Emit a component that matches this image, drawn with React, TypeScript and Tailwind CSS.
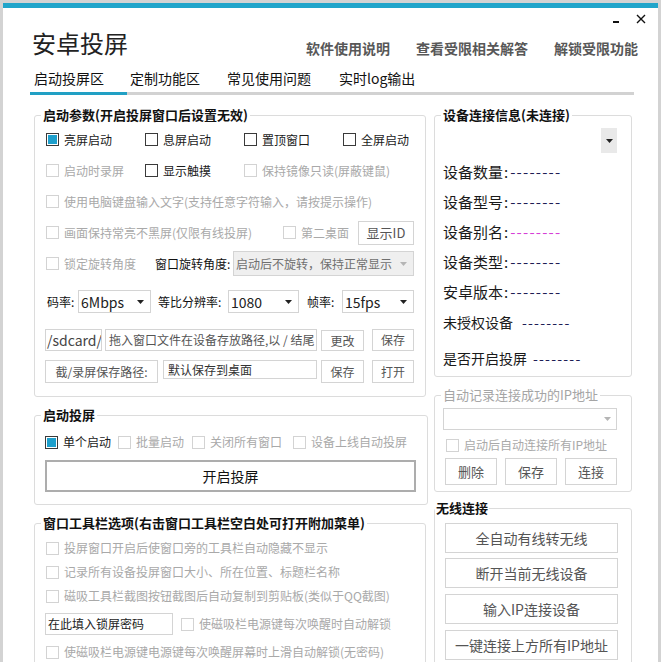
import React from "react";

type CheckProps = {
  label: string;
  checked?: boolean;
  disabled?: boolean;
  className?: string;
};

const Check = ({ label, checked, disabled, className = "" }: CheckProps) => (
  <div className={`flex items-center shrink-0 ${className}`}>
    <span
      className={`w-[13px] h-[13px] border bg-white flex items-center justify-center shrink-0 ${
        disabled ? "border-[#d3d3d3]" : "border-[#3a3a3a]"
      }`}
    >
      {checked && <span className="w-[9px] h-[9px] bg-[#1d9fcc]" />}
    </span>
    <span
      className={`ml-[5px] text-[12px] leading-[16px] whitespace-nowrap ${
        disabled ? "text-[#a9a9a9]" : "text-[#1a1a1a]"
      }`}
    >
      {label}
    </span>
  </div>
);

const Arrow = ({ light }: { light?: boolean }) => (
  <svg width="7" height="4" viewBox="0 0 7 4" className="shrink-0">
    <polygon points="0,0 7,0 3.5,4" fill={light ? "#b5b5b5" : "#222"} />
  </svg>
);

const Combo = ({ value, className = "" }: { value: string; className?: string }) => (
  <div
    className={`h-[23px] border border-[#d4d4d4] bg-white flex items-center pl-[2px] pr-[6px] ${className}`}
  >
    <span className="flex-1 text-[14px] leading-[20px] text-[#222] whitespace-nowrap">{value}</span>
    <Arrow />
  </div>
);

const Btn = ({ label, className = "" }: { label: string; className?: string }) => (
  <div
    className={`border border-[#d4d4d4] bg-white flex items-center justify-center text-[12px] leading-[16px] text-[#555] whitespace-nowrap shrink-0 ${className}`}
  >
    {label}
  </div>
);

const Box = ({
  legend,
  legendClass = "ml-[6px] px-[2px] font-bold text-[#111]",
  className = "",
  children,
}: {
  legend: string;
  legendClass?: string;
  className?: string;
  children: React.ReactNode;
}) => (
  <fieldset className={`border border-[#dcdcdc] rounded-[3px] ${className}`}>
    <legend className={`text-[13px] leading-[16px] whitespace-nowrap ${legendClass}`}>{legend}</legend>
    {children}
  </fieldset>
);

const Dash = ({ pink }: { pink?: boolean }) => (
  <span className={`tracking-[1.2px] ${pink ? "text-[#d63fd6]" : "text-[#1e1e55]"}`}>--------</span>
);

const infoRows = [
  { label: "设备数量", pink: false },
  { label: "设备型号", pink: false },
  { label: "设备别名", pink: true },
  { label: "设备类型", pink: false },
  { label: "安卓版本", pink: false },
];

export default function App() {
  return (
    <div className="w-[664px] h-[662px] overflow-hidden bg-white font-['Noto_Sans_CJK_SC',sans-serif]">
      <div className="w-[661px] h-[662px] border-l-[3px] border-r-[3px] border-t-[3px] border-[#d3d3d3] flex flex-col">
        <div className="h-[5px] bg-[#21a5ca] shrink-0" />

        {/* window controls */}
        <div className="h-[19px] shrink-0 flex justify-end pr-[12px]">
          <div className="w-[6px] h-[2px] bg-[#111] mt-[13px]" />
          <svg width="10" height="10" viewBox="0 0 10 10" className="ml-[17px] mt-[6px]">
            <path d="M1 1 L9 9 M9 1 L1 9" stroke="#111" strokeWidth="1.4" />
          </svg>
        </div>

        {/* title + links */}
        <div className="h-[32px] shrink-0 flex items-end pl-[29px] pr-[20px]">
          <span className="text-[24px] leading-[32px] text-[#222]">安卓投屏</span>
          <div className="ml-auto mb-[1px] flex gap-[26px] text-[14px] leading-[20px] font-bold text-[#585858]">
            <span>软件使用说明</span>
            <span>查看受限相关解答</span>
            <span>解锁受限功能</span>
          </div>
        </div>

        {/* tabs */}
        <div className="h-[33px] shrink-0 pt-[9px] flex text-[14px] leading-[20px] text-[#111]">
          <span className="ml-[31px]">启动投屏区</span>
          <span className="ml-[26px]">定制功能区</span>
          <span className="ml-[27px]">常见使用问题</span>
          <span className="ml-[28px]">实时log输出</span>
        </div>
        <div className="h-[3px] shrink-0 ml-[27px] w-[604px] flex">
          <div className="w-[97px] bg-[#21a0c4]" />
          <div className="flex-1 bg-[#d2d2d2]" />
        </div>

        <div className="flex pl-[31px] pt-[12px] gap-[8px]">
          {/* left column */}
          <div className="w-[392px] shrink-0 flex flex-col">
            <Box legend="启动参数(开启投屏窗口后设置无效)">
              <div className="px-[11px] pt-[1px] pb-[13px] flex flex-col">
                <div className="h-[31px] grid grid-cols-[99px_99px_99px_auto] items-center">
                  <Check label="亮屏启动" checked />
                  <Check label="息屏启动" />
                  <Check label="置顶窗口" />
                  <Check label="全屏启动" />
                </div>
                <div className="h-[31px] grid grid-cols-[99px_99px_auto] items-center">
                  <Check label="启动时录屏" disabled />
                  <Check label="显示触摸" />
                  <Check label="保持镜像只读(屏蔽键鼠)" disabled />
                </div>
                <div className="h-[31px] flex items-center">
                  <Check label="使用电脑键盘输入文字(支持任意字符输入，请按提示操作)" disabled />
                </div>
                <div className="h-[31px] flex items-center">
                  <Check label="画面保持常亮不黑屏(仅限有线投屏)" disabled className="w-[237px]" />
                  <Check label="第二桌面" disabled />
                  <Btn label="显示ID" className="ml-auto w-[56px] h-[24px] text-[13px] text-[#444]" />
                </div>
                <div className="h-[31px] flex items-center">
                  <Check label="锁定旋转角度" disabled className="w-[109px]" />
                  <span className="w-[78px] text-[12px] leading-[16px] text-[#111] whitespace-nowrap">
                    窗口旋转角度:
                  </span>
                  <div className="flex-1 h-[25px] border border-[#d4d4d4] bg-[#efefef] flex items-center pl-[2px] pr-[6px]">
                    <span className="flex-1 text-[12px] leading-[16px] text-[#6f6f6f] whitespace-nowrap">
                      启动后不旋转，保持正常显示
                    </span>
                    <Arrow light />
                  </div>
                </div>
                <div className="h-[23px] mt-[11px] flex items-center text-[12px] leading-[16px] text-[#111]">
                  <span className="ml-[1px] w-[31px] whitespace-nowrap">码率:</span>
                  <Combo value="6Mbps" className="w-[73px]" />
                  <span className="ml-[7px] w-[70px] whitespace-nowrap">等比分辨率:</span>
                  <Combo value="1080" className="w-[71px]" />
                  <span className="ml-[8px] w-[35px] whitespace-nowrap">帧率:</span>
                  <Combo value="15fps" className="w-[72px]" />
                </div>
                <div className="h-[22px] mt-[16px] flex items-stretch">
                  <div className="ml-[-1px] w-[57px] border border-[#d4d4d4] flex items-center pl-[1px] text-[14px] leading-[18px] text-[#444] whitespace-nowrap overflow-hidden">
                    /sdcard/
                  </div>
                  <div className="ml-[3px] w-[212px] border border-[#d4d4d4] flex items-center pl-[3px] text-[12px] leading-[16px] text-[#555] whitespace-nowrap overflow-hidden">
                    拖入窗口文件在设备存放路径,以 / 结尾
                  </div>
                  <Btn label="更改" className="ml-[4px] w-[43px] mt-[1px]" />
                  <Btn label="保存" className="ml-[8px] w-[42px]" />
                </div>
                <div className="h-[23px] mt-[9px] flex items-stretch">
                  <Btn label="截/录屏保存路径:" className="ml-[-1px] w-[113px] text-[#333]" />
                  <div className="ml-[5px] w-[154px] mb-[4px] border border-[#d4d4d4] flex items-center pl-[4px] text-[12px] leading-[16px] text-[#333] whitespace-nowrap">
                    默认保存到桌面
                  </div>
                  <Btn label="保存" className="ml-[4px] w-[43px]" />
                  <Btn label="打开" className="ml-[8px] w-[42px] text-[#333]" />
                </div>
              </div>
            </Box>

            <Box legend="启动投屏" className="mt-[10px]">
              <div className="px-[11px] pt-[8px] pb-[12px] flex flex-col">
                <div className="h-[22px] flex items-center">
                  <Check label="单个启动" checked className="ml-[-1px]" />
                  <Check label="批量启动" disabled className="ml-[7px]" />
                  <Check label="关闭所有窗口" disabled className="ml-[8px]" />
                  <Check label="设备上线自动投屏" disabled className="ml-[11px]" />
                </div>
                <div className="mt-[7px] ml-[-1px] h-[32px] w-[371px] border-2 border-[#adadad] bg-white flex items-center justify-center text-[14px] leading-[20px] text-[#111]">
                  开启投屏
                </div>
              </div>
            </Box>

            <Box legend="窗口工具栏选项(右击窗口工具栏空白处可打开附加菜单)" className="mt-[10px]">
              <div className="px-[11px] pt-[5px] pb-[12px] flex flex-col">
                <div className="h-[24px] flex items-center">
                  <Check label="投屏窗口开启后使窗口旁的工具栏自动隐藏不显示" disabled />
                </div>
                <div className="h-[24px] flex items-center">
                  <Check label="记录所有设备投屏窗口大小、所在位置、标题栏名称" disabled />
                </div>
                <div className="h-[24px] flex items-center">
                  <Check label="磁吸工具栏截图按钮截图后自动复制到剪贴板(类似于QQ截图)" disabled />
                </div>
                <div className="h-[24px] mt-[4px] flex items-center">
                  <div className="ml-[-1px] w-[128px] h-[22px] border border-[#d4d4d4] flex items-center pl-[2px] text-[12px] leading-[16px] text-[#222]">
                    在此填入锁屏密码
                  </div>
                  <Check label="使磁吸栏电源键每次唤醒时自动解锁" disabled className="ml-[8px]" />
                </div>
                <div className="h-[24px] mt-[4px] flex items-center">
                  <Check label="使磁吸栏电源键电源键每次唤醒屏幕时上滑自动解锁(无密码)" disabled />
                </div>
              </div>
            </Box>
          </div>

          {/* right column */}
          <div className="w-[198px] shrink-0 flex flex-col">
            <Box legend="设备连接信息(未连接)">
              <div className="pl-[8px] pr-[14px] pt-[5px] pb-[3px] flex flex-col text-[#1a1a1a]">
                <div className="flex justify-end">
                  <div className="w-[16px] h-[25px] bg-[#e9e9e9] flex items-center justify-center">
                    <Arrow />
                  </div>
                </div>
                <div className="mt-[4px] flex flex-col">
                  {infoRows.map((r) => (
                    <div key={r.label} className="h-[30px] flex items-center text-[15px] leading-[20px] whitespace-nowrap">
                      <span>{r.label}</span>
                      <span className="ml-[1px] mr-[2px]">:</span>
                      <Dash pink={r.pink} />
                    </div>
                  ))}
                  <div className="h-[30px] flex items-center text-[14px] leading-[20px] whitespace-nowrap">
                    <span>未授权设备</span>
                    <span className="ml-[9px]">
                      <Dash />
                    </span>
                  </div>
                  <div className="h-[30px] mt-[6px] flex items-center text-[14px] leading-[20px] whitespace-nowrap">
                    <span>是否开启投屏</span>
                    <span className="ml-[6px]">
                      <Dash />
                    </span>
                  </div>
                </div>
              </div>
            </Box>

            <Box
              legend="自动记录连接成功的IP地址"
              legendClass="ml-[6px] px-[2px] text-[#a5a5a5]"
              className="mt-[10px]"
            >
              <div className="pl-[8px] pr-[14px] pt-[5px] pb-[6px] flex flex-col">
                <div className="h-[22px] border border-[#d4d4d4] bg-white flex items-center justify-end pr-[5px]">
                  <Arrow light />
                </div>
                <div className="h-[20px] mt-[5px] flex items-center">
                  <Check label="启动后自动连接所有IP地址" disabled className="ml-[3px]" />
                </div>
                <div className="h-[27px] mt-[3px] flex gap-[8px] ml-[2px]">
                  <Btn label="删除" className="w-[52px] text-[13px] text-[#444]" />
                  <Btn label="保存" className="w-[52px] text-[13px] text-[#444]" />
                  <Btn label="连接" className="w-[52px] text-[13px] text-[#444]" />
                </div>
              </div>
            </Box>

            <Box legend="无线连接" legendClass="ml-0 px-[1px] font-bold text-[#111]" className="mt-[8px]">
              <div className="pl-[10px] pt-[7px] pb-[12px] flex flex-col">
                <Btn label="全自动有线转无线" className="w-[173px] h-[30px] text-[14px] leading-[20px] text-[#555]" />
                <Btn label="断开当前无线设备" className="w-[173px] h-[30px] mt-[5px] text-[14px] leading-[20px] text-[#555]" />
                <Btn label="输入IP连接设备" className="w-[173px] h-[30px] mt-[6px] text-[14px] leading-[20px] text-[#111] border-[#b8b8b8]" />
                <Btn label="一键连接上方所有IP地址" className="w-[173px] h-[30px] mt-[6px] text-[14px] leading-[20px] text-[#444]" />
              </div>
            </Box>
          </div>
        </div>
      </div>
    </div>
  );
}
